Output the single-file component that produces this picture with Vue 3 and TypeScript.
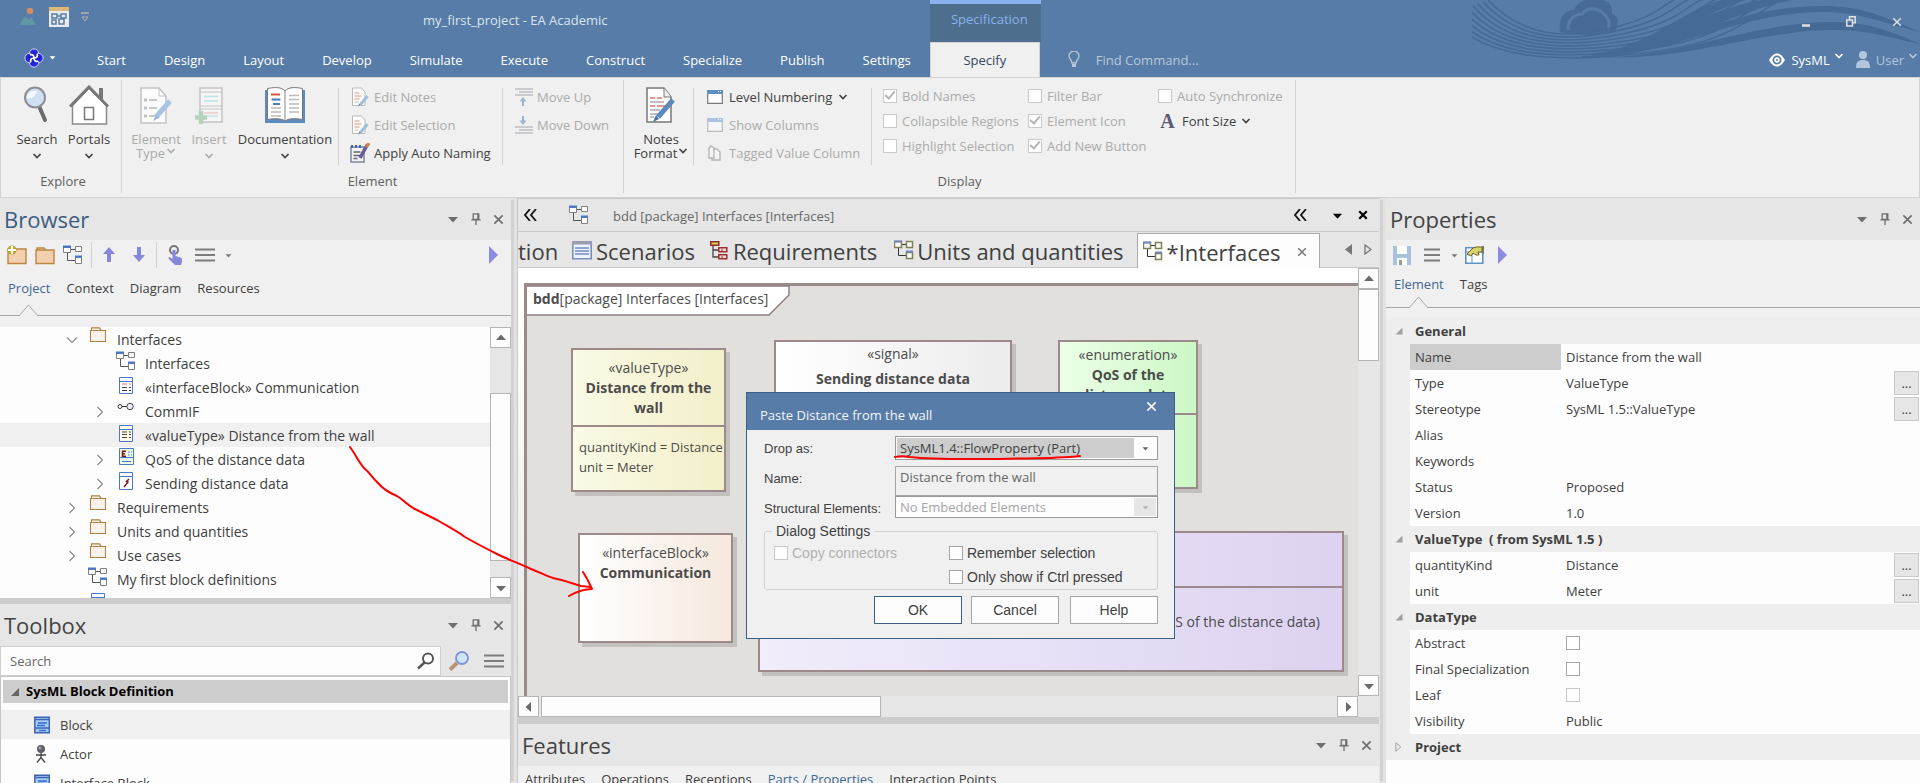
<script setup lang="ts">
import { ref } from 'vue'

const menuTabs: string[] = ['Start', 'Design', 'Layout', 'Develop', 'Simulate', 'Execute', 'Construct', 'Specialize', 'Publish', 'Settings']

interface Check { label: string; on: boolean }
const checkColumns = ref<Check[][]>([
  [{ label: 'Bold Names', on: true }, { label: 'Collapsible Regions', on: false }, { label: 'Highlight Selection', on: false }],
  [{ label: 'Filter Bar', on: false }, { label: 'Element Icon', on: true }, { label: 'Add New Button', on: true }],
])

interface Node { label: string; icon: string; level: 1 | 2; state: 'open' | 'closed' | 'leaf'; selected?: boolean }
const tree: Node[] = [
  { label: 'Interfaces', icon: 'pkg', level: 1, state: 'open' },
  { label: 'Interfaces', icon: 'diagram', level: 2, state: 'leaf' },
  { label: '«interfaceBlock» Communication', icon: 'iblock', level: 2, state: 'leaf' },
  { label: 'CommIF', icon: 'assoc', level: 2, state: 'closed' },
  { label: '«valueType» Distance from the wall', icon: 'vtype', level: 2, state: 'leaf', selected: true },
  { label: 'QoS of the distance data', icon: 'enum', level: 2, state: 'closed' },
  { label: 'Sending distance data', icon: 'signal', level: 2, state: 'closed' },
  { label: 'Requirements', icon: 'pkg', level: 1, state: 'closed' },
  { label: 'Units and quantities', icon: 'pkg', level: 1, state: 'closed' },
  { label: 'Use cases', icon: 'pkg', level: 1, state: 'closed' },
  { label: 'My first block definitions', icon: 'diagram', level: 1, state: 'leaf' },
  { label: '', icon: 'iblock', level: 1, state: 'leaf' },
]

const toolItems = [
  { label: 'Block', icon: 'block' },
  { label: 'Actor', icon: 'actor' },
  { label: 'Interface Block', icon: 'block' },
]

interface Prop { name: string; value?: string; check?: boolean; dim?: boolean; more?: boolean; selected?: boolean }
interface Section { title: string; open: boolean; rows: Prop[] }
const sections: Section[] = [
  {
    title: 'General', open: true, rows: [
      { name: 'Name', value: 'Distance from the wall', selected: true },
      { name: 'Type', value: 'ValueType', more: true },
      { name: 'Stereotype', value: 'SysML 1.5::ValueType', more: true },
      { name: 'Alias', value: '' },
      { name: 'Keywords', value: '' },
      { name: 'Status', value: 'Proposed' },
      { name: 'Version', value: '1.0' },
    ],
  },
  {
    title: 'ValueType  ( from SysML 1.5 )', open: true, rows: [
      { name: 'quantityKind', value: 'Distance', more: true },
      { name: 'unit', value: 'Meter', more: true },
    ],
  },
  {
    title: 'DataType', open: true, rows: [
      { name: 'Abstract', check: true },
      { name: 'Final Specialization', check: true },
      { name: 'Leaf', check: true, dim: true },
      { name: 'Visibility', value: 'Public' },
    ],
  },
  { title: 'Project', open: false, rows: [] },
]

const featureTabs = ['Attributes', 'Operations', 'Receptions', 'Parts / Properties', 'Interaction Points']
const waves = [0, 1, 2, 3, 4, 5, 6, 7, 8]
</script>

<template>
  <div class="app">
    <svg class="defs" aria-hidden="true">
      <symbol id="chev" viewBox="0 0 10 10"><path d="M1.5 3l3.5 3.5L8.500 3" fill="none" stroke="currentColor" stroke-width="1.600" /></symbol>
      <symbol id="caret" viewBox="0 0 12 12"><path d="M1 4h10L6 9.500z" fill="currentColor" /></symbol>
      <symbol id="pin" viewBox="0 0 12 14"><path d="M3 1h6v6H3zM1 7.500h10M6 8v5M8 1v6" fill="none" stroke="currentColor" stroke-width="1.400" /></symbol>
      <symbol id="cross" viewBox="0 0 12 12"><path d="M1.500 1.500l9 9M10.500 1.500l-9 9" fill="none" stroke="currentColor" stroke-width="1.800" /></symbol>
      <symbol id="play" viewBox="0 0 10 18"><path d="M0 0l9 9-9 9z" fill="#8c8cdf" /></symbol>
      <symbol id="lines" viewBox="0 0 20 14"><path d="M0 1.500h20M0 7h20M0 12.500h20" stroke="#7d7d7d" stroke-width="2.200" /></symbol>
      <symbol id="diagram" viewBox="0 0 20 20">
        <path d="M8 4.500h6M4.500 8v7.500H13" fill="none" stroke="#555" />
        <path d="M.5 1.500h7v6h-7zM12.500 1.500h6v5h-6zM12.500 12.500h6v6h-6z" fill="#fff" stroke="#808080" />
        <path d="M0 .5h8v2.500H0zM12 10.500h7V13h-7z" fill="#4f78c4" />
      </symbol>
      <symbol id="diagramTab" viewBox="0 0 20 20">
        <path d="M8 4.500h6M4.500 8v7.500H13" fill="none" stroke="#333" />
        <path d="M.5 1.500h7v6h-7zM12.500 1.500h6v6h-6zM12.500 12.500h6v6h-6z" fill="#fff" stroke="#7f7f55" stroke-width="1.500" />
        <path d="M0 .5h8v2H0zM12 10.500h7v2h-7z" fill="#6f86bb" />
      </symbol>
      <symbol id="pkg" viewBox="0 0 20 20"><path d="M2.500 3.500h15v11h-15zM3.500 3V.9h8l1.500 2.500" fill="#fdf1ec" stroke="#b0803f" stroke-width="1.100" /></symbol>
      <symbol id="iblock" viewBox="0 0 20 20">
        <path d="M3.500 2.500h13v16h-13z" fill="#fff" stroke="#4d78c8" /><path d="M3.500 6.500h13" stroke="#4d78c8" />
        <path d="M6 9h5M13 9h2" stroke="#e07060" /><path d="M6 12.500h5M13 12.500h2M6 15.500h5M13 15.500h2" stroke="#444" />
      </symbol>
      <symbol id="vtype" viewBox="0 0 20 20">
        <path d="M3.500 2.500h13v16h-13z" fill="#fffde8" stroke="#4d78c8" /><path d="M3.500 6.500h13" stroke="#4d78c8" />
        <path d="M6 9h5M13 9h2M6 11.500h5M13 11.500h2M6 14.500h5M13 14.500h2" stroke="#444" />
      </symbol>
      <symbol id="assoc" viewBox="0 0 20 20"><path d="M6 7.500h5" stroke="#333" /><circle cx="4" cy="7.500" r="2" fill="#fff" stroke="#333" /><circle cx="14" cy="7.500" r="3.200" fill="#eceafc" stroke="#444" /></symbol>
      <symbol id="enum" viewBox="0 0 20 20">
        <path d="M3.500 1.500h14v16h-14z" fill="#e9fbe4" stroke="#4d78c8" /><path d="M3.500 10.500h14M6 14.500h9M12 5h1.500M15 5h1M12 8h1.500M15 8h1" stroke="#4d78c8" />
        <path d="M10 4.300H6.500v5H10M6.500 6.800H9" fill="none" stroke="#7b1616" stroke-width="1.500" />
      </symbol>
      <symbol id="signal" viewBox="0 0 20 20">
        <path d="M3.500 1.500h13v17h-13z" fill="#fff" stroke="#4d78c8" /><path d="M3.500 5.500h13" stroke="#4d78c8" />
        <path d="M13 8l-2.500 2.500L12 11l-4 5" fill="none" stroke="#7b1616" stroke-width="1.400" />
      </symbol>
      <symbol id="block" viewBox="0 0 16 17"><path d="M.8.8h14.500v15.500H.8z" fill="#a9cdf6" stroke="#3f63b4" stroke-width="1.500" /><path d="M1 3h14M1 11.500h14" stroke="#3f63b4" stroke-width="1.300" /><path d="M4 6.500h9M3 9h8M5 14h7" stroke="#2f6fd0" stroke-width="1.400" /></symbol>
      <symbol id="actor" viewBox="0 0 16 18"><circle cx="7" cy="4" r="4" fill="#5e5e68" /><circle cx="6" cy="3" r="1.500" fill="#a5a5b0" /><path d="M7 8v5M2 10h10M7 12.500L3 17.500M7 12.500l4 5" stroke="#444" stroke-width="1.300" /></symbol>
      <symbol id="pageEdit" viewBox="0 0 18 20">
        <path d="M1.500 1h9l3.500 4v13.500H1.500z" fill="#fdfdfd" stroke="#b9b9b9" /><path d="M3.500 6h5M3.500 9h7M3.500 12h5" stroke="#eab7a4" stroke-width="1.300" /><path d="M3.500 15h4" stroke="#c4c4c4" />
        <path d="M16.500 9L9 18" stroke="#9cc0dc" stroke-width="3" /><path d="M9.500 17l-2 3 .5-3z" fill="#777" />
      </symbol>
      <symbol id="win" viewBox="0 0 16 14"><path d="M.7.7h14.600v12.600H.7z" fill="#fff" stroke="#7a7a7a" stroke-width="1.200" /><path d="M0 0h16v4H0z" fill="#5e8ec4" /><path d="M11 1.500h1M13 1.500h1" stroke="#fff" /></symbol>
      <symbol id="mag" viewBox="0 0 18 18"><circle cx="11" cy="6.500" r="5" fill="#fff" stroke="#555" stroke-width="2" /><path d="M7.500 10.500L1 16.500" stroke="#555" stroke-width="2.500" /></symbol>
    </svg>

    <header class="titlebar">
      <svg class="waves" viewBox="0 0 448 60" preserveAspectRatio="none" aria-hidden="true">
        <path d="M88 32C86 16 94 10 102 10 106 0 116-2 130 0c10 2 10 8 10 14 8 2 6 10 4 16C130 36 110 36 88 32z" fill="#476a96" />
        <path d="M96 30c0-10 6-16 14-16 6-8 16-6 22 0 6 6 6 10 4 16" fill="none" stroke="#567ca7" stroke-width="3" />
        <path v-for="i in waves" :key="i" :d="`M${16 - i * 5} ${i * 2}C${50 - i * 5} ${36 + i * 3} ${92 - i} ${40 + i * 3} ${140 + i * 5} ${28 + i * 3}S${190 + i * 12} 4 ${206 + i * 14} -2`" fill="none" stroke="#466a94" stroke-width="1.600" />
        <path d="M110 56C170 56 220 12 290 0h30C250 14 190 58 110 58zM120 54C180 46 210 10 250 0h24C230 12 190 50 120 56z" fill="#466a96" />
        <path d="M100 58C190 58 250 6 350 6c40 0 60 10 98 26-40-10-60-20-98-20C260 12 190 62 100 58z" fill="#466a96" />
        <path d="M130 57C210 57 280 22 360 22c40 0 64 12 88 22-30-6-50-14-88-14-70 0-150 32-230 27z" fill="#466a96" />
      </svg>
      <div class="titlerow">
        <div class="quick">
          <svg width="18" height="20" viewBox="0 0 18 20"><circle cx="11" cy="4" r="3.300" fill="#d18d66" /><path d="M0 18l6-9 4 4 2-3 5 8z" fill="#5f98a4" /></svg>
          <svg width="20" height="20" viewBox="0 0 20 20"><path d="M0 2h20v18H0z" fill="#e9ecef" /><path d="M0 0h20v4H0z" fill="#dcb878" /><path d="M3 7h5v4H3zM12 7h5v4h-5zM3 13h4v4H3zM10 12h5v5h-5zM8 9h4" fill="none" stroke="#5a7ba6" stroke-width="1.500" /></svg>
          <svg width="8" height="10" viewBox="0 0 8 10"><path d="M0 1h8" stroke="#b8b3ae" stroke-width="1.500" /><path d="M1 5h6L4 9z" fill="none" stroke="#b8b3ae" /></svg>
        </div>
        <h1 class="apptitle">my_first_project - EA Academic</h1>
        <div class="winbtns">
          <button aria-label="Minimize"><svg width="8" height="10" viewBox="0 0 8 10"><path d="M0 8.500h8" stroke="currentColor" stroke-width="2.500" /></svg></button>
          <button aria-label="Restore"><svg width="10" height="11" viewBox="0 0 10 11"><path d="M3.500 3.500V.8h5.700v6H6.500M.8 4h5.700v6H.8z" fill="none" stroke="currentColor" stroke-width="1.500" /></svg></button>
          <button aria-label="Close"><svg width="10" height="10"><use href="#cross" /></svg></button>
        </div>
      </div>
      <nav class="menurow">
        <button class="orb" aria-label="Application menu">
          <svg width="20" height="20" viewBox="0 0 20 20"><g fill="#2424d8" stroke="#d4d4ff" stroke-width="1"><circle cx="10" cy="5.500" r="4.600" /><circle cx="14.500" cy="10" r="4.600" /><circle cx="10" cy="14.500" r="4.600" /><circle cx="5.500" cy="10" r="4.600" /></g><circle cx="10" cy="10" r="5.500" fill="#2020c8" /><path d="M10 10c0-3-2-4-4-3M10 10c3 0 4-2 3-4M10 10c0 3 2 4 4 3M10 10c-3 0-4 2-3 4" fill="none" stroke="#fff" stroke-width="1.700" /></svg>
          <svg class="orbcaret" width="7" height="7"><use href="#caret" /></svg>
        </button>
        <button v-for="t in menuTabs" :key="t" class="menutab">{{ t }}</button>
        <div class="specwrap">
          <span class="speccap">Specification</span>
          <button class="spectab">Specify</button>
        </div>
        <label class="find">
          <svg width="12" height="17" viewBox="0 0 12 17"><path d="M4 12c0-3-3-4-3-7a5 5 0 0 1 10 0c0 3-3 4-3 7z" fill="none" stroke="currentColor" stroke-width="1.300" /><path d="M4 13h4v3H4z" fill="currentColor" /></svg>
          <input type="text" placeholder="Find Command..." aria-label="Find Command">
        </label>
        <div class="usr">
          <button class="persp"><svg width="16" height="14" viewBox="0 0 16 14"><path d="M0 7C3 2 5.500.5 8 .5S13 2 16 7c-3 5-5.500 6.500-8 6.500S3 12 0 7z" fill="#fff" /><circle cx="8" cy="7" r="3.600" fill="none" stroke="#567ca7" stroke-width="1.700" /><circle cx="8" cy="7" r="1" fill="#567ca7" /></svg>SysML<svg class="up" width="10" height="10"><use href="#chev" /></svg></button>
          <button class="user"><svg width="14" height="17" viewBox="0 0 14 17"><circle cx="7" cy="4" r="4" fill="#b4c6dc" /><path d="M0 17c0-6 2-8 7-8s7 2 7 8z" fill="#b4c6dc" /></svg>User<svg class="up" width="10" height="10"><use href="#chev" /></svg></button>
        </div>
      </nav>
    </header>

    <section class="ribbon">
      <div class="group explore">
        <div class="tools">
          <button class="big w50"><svg width="28" height="38" viewBox="0 0 28 38"><path d="M16 20l6 14" stroke="#6b6b6b" stroke-width="4" stroke-linecap="round" /><circle cx="12" cy="11.500" r="10" fill="#cfe0f2" stroke="#8d8d95" stroke-width="2" /><path d="M4 12c0-5 4-8 10-7-2 6-5 8-10 7z" fill="#f3f8fe" /></svg><span>Search</span><svg width="10" height="10"><use href="#chev" /></svg></button>
          <button class="big w54"><svg width="40" height="40" viewBox="0 0 40 40"><path d="M30 3h4v15h-4z" fill="#777" /><path d="M3.500 20.500V39h34V20.500L20 3z" fill="#fff" stroke="#8a8a8a" stroke-width="1.500" /><path d="M1 21.500L20 2l19 19.500" fill="none" stroke="#777" stroke-width="3" /><path d="M15.500 22.500h9v12h-9z" fill="#fff" stroke="#777" stroke-width="1.500" /></svg><span>Portals</span><svg width="10" height="10"><use href="#chev" /></svg></button>
        </div>
        <span class="caption">Explore</span>
      </div>
      <div class="group element">
        <div class="tools">
          <button class="big w54" disabled><svg width="32" height="38" viewBox="0 0 32 38"><path d="M1 2h18l7 8v27H1z" fill="#fbfbfb" stroke="#c4c4c4" stroke-width="1.500" /><path d="M19 2v8h7" fill="none" stroke="#c4c4c4" /><path d="M9 14h8M9 22h8M9 30h6" stroke="#c8c8c8" stroke-width="2" /><path d="M4 14h3M4 22h3M4 30h3" stroke="#c0c0c0" stroke-width="3" /><path d="M30 15L16 31" stroke="#a9c4e2" stroke-width="5" /><path d="M16 29l-3 6 6-3z" fill="#9db8d6" /></svg><span>Element</span><span class="inl">Type<svg width="10" height="10"><use href="#chev" /></svg></span></button>
          <button class="big w52" disabled><svg width="28" height="38" viewBox="0 0 28 38"><path d="M5 2h22v34H5z" fill="#f5f5f5" stroke="#c4c4c4" stroke-width="1.500" /><path d="M5 6h22M5 20h22M5 23h22" stroke="#c4c4c4" /><path d="M9 10.500h14M9 15h14M9 30h14" stroke="#bfe3e8" stroke-width="1.500" /><path d="M9 27h14" stroke="#ecc8c8" stroke-width="1.500" /><path d="M6 25v13M0 31.500h12" stroke="#b3d3bd" stroke-width="4.500" /></svg><span>Insert</span><svg width="10" height="10"><use href="#chev" /></svg></button>
          <button class="big w100"><svg width="40" height="36" viewBox="0 0 40 36"><path d="M0 3h40v33H0z" fill="#5d8bbf" /><path d="M2.500 1.500c8-1.500 14-1.500 17.500 2.500 3.500-4 9.500-4 17.500-2.500v31c-8-1.500-14-1-17.500 1.500-3.500-2.500-9.500-3-17.500-1.500z" fill="#fff" stroke="#777" /><path d="M20 4v30" stroke="#888" /><path d="M6 12.500h10M6 21h10M6 25h10M6 29h10M24 8.500h10M24 12.500h10M24 17h10M24 21h10M24 25h10" stroke="#b9b9b9" stroke-width="1.500" /><path d="M6 7.500h9" stroke="#d8573a" stroke-width="2" /><path d="M7 12.500h8M8 17h7" stroke="#4d7ec0" stroke-width="2" /></svg><span>Documentation</span><svg width="10" height="10"><use href="#chev" /></svg></button>
          <div class="stack first">
            <button disabled><svg width="20" height="20"><use href="#pageEdit" /></svg>Edit Notes</button>
            <button disabled><svg width="20" height="20"><use href="#pageEdit" /></svg>Edit Selection</button>
            <button><svg width="20" height="20" viewBox="0 0 20 20"><path d="M1 4h13v15H1z" fill="#f2f4f8" stroke="#7d879c" stroke-width="1.500" /><path d="M1 2h2v3H1zM5 2h2v3H5zM9 2h2v3H9z" fill="#3f65b8" /><path d="M3.500 9h7M3.500 12.500h7M3.500 15.500h4" stroke="#666" stroke-width="1.300" /><path d="M17.500 1.500L10 15" stroke="#6a5a96" stroke-width="3.500" /><path d="M19 0l-3 4" stroke="#c9824c" stroke-width="3" /></svg>Apply Auto Naming</button>
          </div>
          <div class="stack">
            <button disabled><svg width="18" height="18" viewBox="0 0 18 18"><path d="M0 1h18M4 4h14M0 7h18" stroke="#bdbdc4" stroke-width="1.700" /><path d="M8 18v-6" stroke="#9db4cc" stroke-width="2" /><path d="M4.500 13.500L8 9l3.500 4.500z" fill="#9db4cc" /></svg>Move Up</button>
            <button disabled><svg width="18" height="18" viewBox="0 0 18 18"><path d="M0 11h18M4 14h14M0 17h18" stroke="#bdbdc4" stroke-width="1.700" /><path d="M8 0v6" stroke="#9db4cc" stroke-width="2" /><path d="M4.500 4.500L8 9l3.500-4.500z" fill="#9db4cc" /></svg>Move Down</button>
          </div>
        </div>
        <span class="caption">Element</span>
      </div>
      <div class="group display">
        <div class="tools">
          <button class="big w60"><svg width="30" height="38" viewBox="0 0 30 38"><path d="M1 2h17l7 9v25H1z" fill="#fff" stroke="#777" stroke-width="1.500" /><path d="M18 2v9h7" fill="#eee" stroke="#777" /><path d="M4 12h5M11 12h5M4 20h5M11 20h8" stroke="#dc7a60" stroke-width="1.300" /><path d="M4 16h14M4 24h10M4 28h8M4 31h4" stroke="#aaa" stroke-width="1.300" /><path d="M27 14L12 31" stroke="#5b88bd" stroke-width="5" /><path d="M10 29l-3 7 6-3z" fill="#4b73a4" /></svg><span>Notes</span><span class="inl">Format<svg width="10" height="10"><use href="#chev" /></svg></span></button>
          <div class="stack lvl">
            <button><svg width="16" height="14"><use href="#win" /></svg>Level Numbering<svg width="10" height="10"><use href="#chev" /></svg></button>
            <button disabled><svg class="fade" width="16" height="14"><use href="#win" /></svg>Show Columns</button>
            <button disabled><svg width="16" height="16" viewBox="0 0 16 16"><path d="M2 3l2-2 3 2v10H2zM7 4h3l3 3v8H5v-2" fill="#f4f4f4" stroke="#b5b5b5" stroke-width="1.400" /></svg>Tagged Value Column</button>
          </div>
          <div class="checks">
            <div v-for="(col, c) in checkColumns" :key="c">
              <label v-for="k in col" :key="k.label"><input v-model="k.on" type="checkbox" disabled>{{ k.label }}</label>
            </div>
            <div>
              <label><input type="checkbox" disabled>Auto Synchronize</label>
              <button class="fontsize"><b>A</b>Font Size<svg width="10" height="10"><use href="#chev" /></svg></button>
            </div>
          </div>
        </div>
        <span class="caption">Display</span>
      </div>
    </section>

    <main class="work">
      <aside class="dock">
        <section class="browser">
          <div class="dockhead"><h2 class="active">Browser</h2><div class="hb"><button aria-label="Menu"><svg width="12" height="12"><use href="#caret" /></svg></button><button aria-label="Pin"><svg width="12" height="13"><use href="#pin" /></svg></button><button aria-label="Close"><svg width="11" height="11"><use href="#cross" /></svg></button></div></div>
          <div class="toolbar">
            <button aria-label="New package"><svg width="20" height="20" viewBox="0 0 20 20"><path d="M1 4h18v14.500H1z" fill="#f4cfae" stroke="#b98746" stroke-width="1.400" /><circle cx="5" cy="5" r="4.500" fill="#b8a320" /><path d="M5 1v8M1 5h8" stroke="#fff" stroke-width="2.200" /></svg></button>
            <button aria-label="Package"><svg width="20" height="20" viewBox="0 0 20 20"><path d="M2 5V3h7l2 2" fill="#f4cfae" stroke="#b98746" stroke-width="1.400" /><path d="M1 5h18v13.500H1z" fill="#f4cfae" stroke="#b98746" stroke-width="1.400" /></svg></button>
            <button aria-label="Diagram"><svg width="20" height="20"><use href="#diagram" /></svg></button>
            <i class="tsep"></i>
            <button aria-label="Move up"><svg width="14" height="16" viewBox="0 0 14 16"><path d="M7 15V5" stroke="#8686dc" stroke-width="4" /><path d="M1 7l6-7 6 7z" fill="#8686dc" /></svg></button>
            <button aria-label="Move down" class="dn"><svg width="14" height="16" viewBox="0 0 14 16"><path d="M7 0v10" stroke="#8686dc" stroke-width="4" /><path d="M1 8l6 7 6-7z" fill="#8686dc" /></svg></button>
            <i class="tsep"></i>
            <button aria-label="Select"><svg width="16" height="20" viewBox="0 0 16 20"><circle cx="7" cy="5" r="4" fill="none" stroke="#777" stroke-width="2" /><path d="M5.500 5h3v6l5 1.500c1.500.5 1.500 2 1.500 4l-1 3.500H8l-7-7 1.500-1 3 2z" fill="#8686dc" /></svg></button>
            <button aria-label="Options" class="opt"><svg width="20" height="14"><use href="#lines" /></svg></button>
            <svg class="gry" width="7" height="7"><use href="#caret" /></svg>
            <button class="end" aria-label="More"><svg width="10" height="18"><use href="#play" /></svg></button>
          </div>
          <div class="ptabs btabs"><button class="cur">Project</button><button>Context</button><button>Diagram</button><button>Resources</button></div>
          <div class="notch"><svg width="19" height="12" viewBox="0 0 19 12"><path d="M0 12L9.500 1 19 12" fill="#f0f0f0" stroke="#a8a8a8" /></svg></div>
          <div class="treewrap">
            <ul class="tree">
              <li v-for="(n, i) in tree" :key="i" :class="['lv' + n.level, { sel: n.selected }]">
                <span class="tw"><svg v-if="n.state !== 'leaf'" :class="{ shut: n.state === 'closed' }" width="12" height="12" viewBox="0 0 12 12"><path d="M1 3.500l5 5 5-5" fill="none" stroke="#8a8a8a" stroke-width="1.200" /></svg></span>
                <svg class="ti" width="20" height="20"><use :href="'#' + n.icon" /></svg>
                <span>{{ n.label }}</span>
              </li>
            </ul>
            <div class="vbar tv"><button aria-label="Scroll up"><svg class="flip" width="12" height="12"><use href="#caret" /></svg></button><i class="gap45"></i><i class="thumb"></i><i class="gap16"></i><button aria-label="Scroll down"><svg width="12" height="12"><use href="#caret" /></svg></button></div>
          </div>
        </section>
        <section class="toolbox">
          <div class="dockhead"><h2>Toolbox</h2><div class="hb"><button aria-label="Menu"><svg width="12" height="12"><use href="#caret" /></svg></button><button aria-label="Pin"><svg width="12" height="13"><use href="#pin" /></svg></button><button aria-label="Close"><svg width="11" height="11"><use href="#cross" /></svg></button></div></div>
          <div class="searchrow">
            <label class="sbox"><input type="text" placeholder="Search" aria-label="Search"><svg width="18" height="18"><use href="#mag" /></svg></label>
            <button aria-label="Find toolbox"><svg width="20" height="20" viewBox="0 0 20 20"><path d="M8 12l-7 6.500" stroke="#b99474" stroke-width="4" /><circle cx="13" cy="7" r="6" fill="#cfe6fa" stroke="#7f93d8" stroke-width="1.800" /></svg></button>
            <button aria-label="Toolbox menu"><svg width="20" height="14"><use href="#lines" /></svg></button>
          </div>
          <div class="tbody">
            <h3><svg width="8" height="8" viewBox="0 0 8 8"><path d="M8 0v8H0z" fill="#666" /></svg>SysML Block Definition</h3>
            <ul><li v-for="(t, i) in toolItems" :key="t.label" :class="{ hot: i === 0 }"><svg width="16" height="18"><use :href="'#' + t.icon" /></svg>{{ t.label }}</li></ul>
          </div>
        </section>
      </aside>

      <section class="centre">
        <div class="crumb">
          <button class="lft" aria-label="Collapse left"><svg width="13" height="12" viewBox="0 0 13 12"><path d="M6 0L1 6l5 6M12 0L7 6l5 6" fill="none" stroke="#111" stroke-width="1.800" /></svg></button>
          <svg class="cd" width="20" height="20"><use href="#diagram" /></svg>
          <span>bdd [package] Interfaces [Interfaces]</span>
          <div class="cr">
            <button aria-label="Collapse right"><svg width="13" height="12" viewBox="0 0 13 12"><path d="M6 0L1 6l5 6M12 0L7 6l5 6" fill="none" stroke="#111" stroke-width="1.800" /></svg></button>
            <button aria-label="Menu"><svg width="11" height="11"><use href="#caret" /></svg></button>
            <button aria-label="Close"><svg width="10" height="10" viewBox="0 0 12 12"><path d="M1.500 1.500l9 9M10.500 1.500l-9 9" stroke="#000" stroke-width="2.600" /></svg></button>
          </div>
        </div>
        <div class="dtabs">
          <button class="t0">tion</button>
          <button class="t1"><svg width="20" height="20" viewBox="0 0 20 20"><path d="M.8 1.800h18.400v17H.8z" fill="#eef2fa" stroke="#7a8fbe" stroke-width="1.600" /><path d="M0 1h20v3.500H0z" fill="#9a9cb4" /><path d="M3 8h14M3 11h14M3 14h14" stroke="#6d8ac8" stroke-width="1.500" /></svg>Scenarios</button>
          <button class="t2"><svg width="18" height="20" viewBox="0 0 18 20"><path d="M3 5v12h6M3 10h6" fill="none" stroke="#444" stroke-width="1.300" /><path d="M.8 1.800h8v3.500h-8z" fill="#e3cf4a" stroke="#8c2c2c" stroke-width="1.500" /><path d="M8.800 7.800h8v4h-8zM8.800 14.800h8v4h-8z" fill="#f3dcdc" stroke="#9c3030" stroke-width="1.500" /><path d="M12 9v2M12 16v2" stroke="#9c3030" /></svg>Requirements</button>
          <button class="t3"><svg width="20" height="20"><use href="#diagramTab" /></svg>Units and quantities</button>
          <button class="on"><svg width="20" height="20"><use href="#diagramTab" /></svg>*Interfaces<svg class="tx" width="10" height="10"><use href="#cross" /></svg></button>
          <div class="nav"><svg width="8" height="11" viewBox="0 0 8 11"><path d="M8 0v11L1 5.500z" fill="#777" /></svg><svg width="8" height="11" viewBox="0 0 8 11"><path d="M1 1v9l6-4.500z" fill="none" stroke="#777" stroke-width="1.300" /></svg></div>
        </div>
        <div class="view">
          <div class="canvas">
            <div class="frame">
              <div class="ftag"><svg width="264" height="32" viewBox="0 0 264 32" aria-hidden="true"><path d="M0 1h262v9l-20 20H0" fill="#fff" stroke="#8f7f7f" stroke-width="1.500" /></svg><span><b>bdd</b>[package] Interfaces [Interfaces]</span></div>
            </div>
            <article class="node vt"><div class="nh">«valueType»<b>Distance from the wall</b></div><div class="nb"><p>quantityKind = Distance</p><p>unit = Meter</p></div></article>
            <article class="node sg"><div class="nh">«signal»<b>Sending distance data</b></div></article>
            <article class="node en"><div class="nh">«enumeration»<b>QoS of the distance data</b></div><div class="nb"></div></article>
            <article class="node ib"><div class="nh">«interfaceBlock»<b>Communication</b></div></article>
            <article class="node pu"><div class="nh"></div><div class="nb"><p>(QoS of the distance data)</p></div></article>
          </div>
          <div class="vbar cv"><button aria-label="Scroll up"><svg class="flip" width="12" height="12"><use href="#caret" /></svg></button><i class="thumb"></i><i class="gap"></i><button aria-label="Scroll down"><svg width="12" height="12"><use href="#caret" /></svg></button></div>
        </div>
        <div class="hbar"><button aria-label="Scroll left"><svg class="rl" width="12" height="12"><use href="#caret" /></svg></button><i class="thumb"></i><i class="gap"></i><button aria-label="Scroll right"><svg class="rr" width="12" height="12"><use href="#caret" /></svg></button><i class="corner"></i></div>
        <section class="features">
          <div class="dockhead"><h2>Features</h2><div class="hb"><button aria-label="Menu"><svg width="12" height="12"><use href="#caret" /></svg></button><button aria-label="Pin"><svg width="12" height="13"><use href="#pin" /></svg></button><button aria-label="Close"><svg width="11" height="11"><use href="#cross" /></svg></button></div></div>
          <div class="ptabs ftabs"><button v-for="f in featureTabs" :key="f" :class="{ cur: f.startsWith('Parts') }">{{ f }}</button></div>
        </section>
      </section>

      <aside class="props">
        <div class="dockhead"><h2>Properties</h2><div class="hb"><button aria-label="Menu"><svg width="12" height="12"><use href="#caret" /></svg></button><button aria-label="Pin"><svg width="12" height="13"><use href="#pin" /></svg></button><button aria-label="Close"><svg width="11" height="11"><use href="#cross" /></svg></button></div></div>
        <div class="toolbar pt">
          <button aria-label="Save"><svg width="18" height="19" viewBox="0 0 18 19"><path d="M0 0h18v19H0z" fill="#a9c1dd" /><path d="M4 0h10v8H4zM4 12h10v7H4z" fill="#fff" /><path d="M6 14h3v5H6z" fill="#9a9a9a" /></svg></button>
          <button aria-label="Options" class="m"><svg width="16" height="14" viewBox="0 0 16 14"><path d="M0 1.500h16M0 7h16M0 12.500h16" stroke="#7d7d7d" stroke-width="2.200" /></svg></button>
          <svg class="gry" width="7" height="7"><use href="#caret" /></svg>
          <button aria-label="Property window" class="w"><svg width="19" height="18" viewBox="0 0 19 18"><path d="M.8 1.800h17v15.500H.8z" fill="#fff" stroke="#5e93c8" stroke-width="1.600" /><path d="M1 6h17M7 6v11" stroke="#5e93c8" /><path d="M17 0h2v8h-2z" fill="#777" /><path d="M2 8l6-6 3-1h6v5h-4l1 3-3 0-3-2-2 3z" fill="#d9d468" stroke="#6a6422" /></svg></button>
          <button aria-label="More" class="p"><svg width="10" height="18"><use href="#play" /></svg></button>
        </div>
        <div class="ptabs etabs"><button class="cur">Element</button><button>Tags</button></div>
        <div class="notch pn"><svg width="19" height="12" viewBox="0 0 19 12"><path d="M0 12L9.500 1 19 12" fill="#f0f0f0" stroke="#a8a8a8" /></svg></div>
        <div class="gridwrap">
          <table class="grid">
            <colgroup><col class="c-gut"><col class="c-key"><col></colgroup>
            <tbody v-for="s in sections" :key="s.title">
              <tr class="sec"><td class="gut"><svg width="8" height="10" viewBox="0 0 8 10"><path v-if="s.open" d="M7.500 1.500v7h-7z" fill="#a0a0a0" /><path v-else d="M.8.8v8.400l5-4.200z" fill="none" stroke="#a0a0a0" /></svg></td><th colspan="2">{{ s.title }}</th></tr>
              <tr v-for="p in s.rows" :key="p.name"><td class="gut"></td><td :class="['k', { sel: p.selected }]">{{ p.name }}</td><td class="v"><div><input v-if="p.check" type="checkbox" :aria-label="p.name" :disabled="p.dim"><span v-else>{{ p.value }}</span><button v-if="p.more" class="more" :aria-label="'Edit ' + p.name">...</button></div></td></tr>
            </tbody>
          </table>
        </div>
      </aside>

      <div class="dialog" role="dialog" aria-labelledby="dlgtitle">
        <div class="dt"><span id="dlgtitle">Paste Distance from the wall</span><button aria-label="Close dialog"><svg width="11" height="11"><use href="#cross" /></svg></button></div>
        <div class="form">
          <label for="dropas">Drop as:</label>
          <div class="cmb"><select id="dropas"><option>SysML1.4::FlowProperty (Part)</option></select><span><svg width="7" height="7"><use href="#caret" /></svg></span></div>
          <label for="nm">Name:</label>
          <input id="nm" type="text" value="Distance from the wall" readonly>
          <label for="se">Structural Elements:</label>
          <div class="cmb off"><select id="se" disabled><option>No Embedded Elements</option></select><span><svg width="7" height="7"><use href="#caret" /></svg></span></div>
        </div>
        <fieldset><legend>Dialog Settings</legend>
          <label class="dim"><input type="checkbox" disabled>Copy connectors</label>
          <label><input type="checkbox">Remember selection</label>
          <label class="c2"><input type="checkbox">Only show if Ctrl pressed</label>
        </fieldset>
        <div class="btns"><button class="ok">OK</button><button>Cancel</button><button class="help">Help</button></div>
      </div>

      <svg class="ink" viewBox="0 0 1100 420" aria-hidden="true">
        <path d="M350 249c6 8 8 14 14 21 6 5 8 9 13 14 6 7 12 11 20 14 8 5 8 7 16 12l24 12c10 6 18 10 28 17 12 7 22 12 34 18 10 5 20 8 32 14 10 4 18 8 22 9 10 2 18 5 28 8l10 1" />
        <path d="M583 374c4 6 6 10 9 17-8 0-16 3-23 7" />
        <path d="M895 259c5-1 9-1 14 0 30 3 60 2 90 2 28-1 54 0 81-3" />
      </svg>
    </main>
  </div>
</template>

<style>
html, body { margin: 0; }
</style>

<style scoped>
.app { height: 100vh; display: flex; flex-direction: column; overflow: hidden; background: #eee; color: #404040; font: 13px/18px "Open Sans", "Noto Sans", sans-serif; }
.app * { box-sizing: border-box; }
.defs { display: none; }
button { font: inherit; color: inherit; background: none; border: 0; padding: 0; margin: 0; white-space: nowrap; }
input, select { font: inherit; color: inherit; margin: 0; border-radius: 0; }
svg { display: block; flex: none; }
ul { list-style: none; margin: 0; padding: 0; }
h1, h2, h3, p { margin: 0; font-weight: 400; }

input[type="checkbox"] { appearance: none; width: 14px; height: 14px; border: 1px solid #a5a5a5; background: #fff; flex: none; display: grid; place-items: center; }
input[type="checkbox"]:disabled { border-color: #c9c9c9; }
input[type="checkbox"]:checked::before { content: ""; width: 8px; height: 4px; border: solid #b5b5b5; border-width: 0 0 2px 2px; transform: rotate(-50deg); margin-bottom: 3px; }

.titlebar { position: relative; flex: none; height: 77px; background: #567ca7; color: #fff; display: flex; flex-direction: column; }
.waves { position: absolute; right: 0; top: 0; width: 448px; height: 60px; }
.titlerow { height: 42px; display: flex; align-items: flex-start; position: relative; }
.quick { display: flex; gap: 12px; padding: 7px 0 0 19px; width: 423px; align-items: center; }
.apptitle { font-size: 13px; line-height: 18px; color: #dbe4ee; padding-top: 11px; flex: 1; }
.winbtns { display: flex; gap: 36px; padding: 16px 18px 0 0; color: #e0e0e0; align-items: center; }
.menurow { display: flex; height: 35px; position: relative; align-items: stretch; }
.orb { display: flex; align-items: center; gap: 5px; width: 78px; padding: 0 0 4px 24px; }
.menutab { padding: 0 19px; }
.specwrap { position: relative; width: 110px; display: flex; }
.speccap { position: absolute; left: 0; bottom: 35px; width: 111px; height: 43px; border-top: 5px solid #8ab2ec; background: #4e6e8e; color: #8ab2ec; text-align: center; line-height: 31px; padding-left: 8px; }
.spectab { flex: 1; background: #f0f0f0; color: #33475f; border: 1px solid #d4d4d4; border-bottom: 0; }
.find { display: flex; align-items: center; gap: 16px; margin-left: 28px; color: #b9c8d8; }
.find input { background: none; border: 0; outline: 0; padding: 0; width: 160px; }
.find input::placeholder { color: #b9c8d8; opacity: 1; }
.usr { margin-left: auto; display: flex; align-items: center; gap: 12px; padding-right: 2px; }
.persp, .user { display: flex; align-items: center; gap: 6px; }
.user { color: #b4c6dc; }
.up { margin-bottom: 8px; }
.usr .up { margin-left: -2px; }

.ribbon { flex: none; height: 121px; display: flex; background: #f0f0f0; border: 1px solid #d2d2d2; }
.group { border-right: 1px solid #d2d2d2; margin: 2px 0 4px; display: flex; flex-direction: column; justify-content: space-between; }
.tools { display: flex; }
.caption { text-align: center; color: #5e5e5e; padding-bottom: 3px; }
.explore { width: 121px; }
.explore .tools { padding-left: 11px; }
.explore .caption { padding-left: 4px; }
.big { display: flex; flex-direction: column; align-items: center; line-height: 14px; padding-top: 5px; height: 92px; }
.big > svg:first-child { height: 40px; margin-bottom: 7px; }
.big > span + svg { margin-top: 5px; }
.inl { display: flex; gap: 1px; }
.w50 { width: 50px; }
.w52 { width: 52px; }
.w54 { width: 54px; }
.w60 { width: 58px; }
.w100 { width: 100px; }
button:disabled { color: #ababab; }
.element { width: 502px; }
.element .tools { padding-left: 7px; }
.stack { border-left: 1px solid #d2d2d2; padding-left: 12px; margin-top: 8px; height: 77px; }
.stack.first { margin-left: 3px; width: 164px; padding-left: 11px; }
.stack button { display: flex; align-items: center; gap: 4px; height: 28px; margin-top: -5px; margin-bottom: 5px; }
.display { width: 672px; }
.display .tools { padding-left: 8px; }
.lvl { margin-left: 3px; width: 178px; padding-left: 13px; }
.stack.lvl button { gap: 6px; }
.fade { opacity: .45; }
.checks { border-left: 1px solid #d2d2d2; margin-top: 8px; height: 77px; padding-left: 11px; display: grid; grid-template-columns: 145px 130px auto; color: #ababab; }
.checks > div { margin-top: -5px; }
.checks label, .fontsize { display: flex; align-items: center; gap: 5px; height: 25px; white-space: nowrap; }
.fontsize { color: #404040; }
.fontsize b { font: 700 20px/20px "Liberation Serif", serif; color: #5b5775; width: 19px; }

.work { position: relative; flex: 1; min-height: 0; display: grid; grid-template-columns: 511px minmax(0, 1fr) 534px; column-gap: 6px; background: #e2e2e2; overflow: hidden; }
.work > * { min-height: 0; }
.dock { display: flex; flex-direction: column; box-shadow: 5px 0 0 -2px #d2d2d2; }
.dockhead { height: 42px; background: #e6e6e6; display: flex; align-items: center; justify-content: space-between; flex: none; padding: 0 7px 0 4px; }
.dockhead h2 { font-size: 22px; line-height: 32px; color: #434343; }
.dockhead h2.active { color: #3d5c82; }
.hb { display: flex; gap: 11px; align-items: center; color: #6e6e6e; }
.browser { flex: 1; min-height: 0; display: flex; flex-direction: column; background: #f0f0f0; border-bottom: 6px solid #ccc; }
.toolbar { display: flex; align-items: center; height: 30px; padding-left: 7px; gap: 8px; flex: none; }
.tsep { width: 1px; height: 26px; background: #cfcfcf; }
.tsep + button { margin-left: 2px; }
.dn { margin: 0 2px 0 8px; }
.opt { margin-left: 4px; }
.toolbar .gry { color: #777; margin-left: 2px; }
.toolbar .end { margin-left: auto; margin-right: 12px; }
.ptabs { display: flex; gap: 16px; flex: none; align-items: flex-start; }
.ptabs .cur { color: #3f6894; }
.btabs { padding: 9px 8px 0; height: 34px; }
.notch { border-bottom: 1px solid #a8a8a8; height: 12px; padding-left: 19px; flex: none; }
.notch svg { height: 12px; }
.treewrap { flex: 1; min-height: 0; margin-top: 11px; display: flex; background: #fdfdfd; overflow: hidden; }
.tree { flex: 1; overflow: hidden; font-size: 14px; }
.tree li { height: 24px; display: flex; align-items: center; white-space: nowrap; }
.lv1 { padding-left: 66px; }
.lv2 { padding-left: 94px; }
.tree li.sel { background: #f0f0f0; }
.tw { width: 22px; display: flex; padding-top: 2px; }
.shut { transform: rotate(-90deg); }
.ti { margin-right: 9px; align-self: flex-start; }
.tree li > span:last-child { padding-top: 1px; }
.vbar { width: 21px; background: #e6e6e6; display: flex; flex-direction: column; flex: none; color: #6a6a6a; }
.vbar button, .hbar button { width: 21px; height: 21px; border: 1px solid #b5b5b5; background: #fdfdfd; display: grid; place-items: center; flex: none; }
.thumb { background: #fdfdfd; border: 1px solid #b5b5b5; display: block; }
.tv .thumb { flex: 1; }
.gap45 { height: 45px; }
.gap16 { height: 16px; }
.flip { transform: rotate(180deg); }
.rl { transform: rotate(90deg); }
.rr { transform: rotate(-90deg); }

.toolbox { flex: 0 0 179px; display: flex; flex-direction: column; overflow: hidden; background: #e6e6e6; }
.searchrow { display: flex; height: 30px; align-items: center; flex: none; }
.searchrow button { margin-left: 8px; }
.searchrow button + button { margin-left: 15px; }
.sbox { width: 441px; height: 30px; border: 1px solid #cfcfcf; background: #fdfdfd; display: flex; align-items: center; padding: 0 5px 0 9px; }
.sbox input { border: 0; background: none; flex: 1; outline: 0; padding: 0; }
.sbox input::placeholder { color: #666; opacity: 1; }
.tbody { flex: 1; border: 1px solid #c4c4c4; background: #fdfdfd; padding-top: 3px; }
.tbody h3 { background: #cdcdcd; color: #000; font-weight: 700; font-size: 13px; line-height: 23px; margin: 0 2px 7px; padding-left: 8px; display: flex; align-items: center; gap: 7px; }
.tbody li { height: 29px; display: flex; align-items: center; gap: 10px; padding-left: 33px; }
.tbody .hot { background: #f0f0f0; }

.centre { display: flex; flex-direction: column; border-left: 1px solid #c9c9c9; border-top: 1px solid #c9c9c9; min-width: 0; padding-right: 1px; background: #e6e6e6; box-shadow: 5px 0 0 -2px #d2d2d2; }
.crumb { height: 33px; border-bottom: 1px solid #c9c9c9; display: flex; align-items: center; flex: none; padding: 0 11px 0 6px; color: #666; }
.crumb .lft { margin-right: 32px; }
.crumb .cd { margin-right: 24px; }
.crumb > span { padding-top: 2px; }
.cr { margin-left: auto; display: flex; align-items: center; gap: 15px; color: #000; }
.cr button:first-child { margin-right: 10px; }
.dtabs { height: 36px; display: flex; font-size: 22px; line-height: 30px; border-bottom: 1px solid #c9c9c9; flex: none; }
.dtabs button { display: flex; align-items: center; gap: 4px; padding-top: 2px; }
.dtabs button svg { margin-bottom: 2px; }
.dtabs .t0 { width: 40px; margin-right: 14px; }
.dtabs .t1 { margin-right: 15px; }
.dtabs .t2 { margin-right: 17px; gap: 5px; }
.dtabs .t3 { margin-right: 13px; gap: 3px; }
.dtabs .on { background: #fdfdfd; border: 1px solid #aaa; border-bottom: 0; margin: 1px 0 -1px; padding: 2px 12px 0 5px; }
.dtabs .tx { color: #777; margin: 0 0 0 12px; }
.nav { margin-left: auto; display: flex; gap: 12px; align-items: center; padding-right: 7px; }
.view { flex: 1; min-height: 0; display: flex; }
.canvas { position: relative; flex: 1; overflow: hidden; background: linear-gradient(#fff 0, #fff 30px, #e8e8e8 100%); font-size: 14px; line-height: 20px; color: #4c4c4c; }
.frame { position: absolute; inset: 15px 0 0 6px; background: #e1e0dc; border-top: 3px solid #9a8b8b; border-left: 3px solid #9a8b8b; }
.ftag { position: absolute; left: 0; top: -1px; }
.ftag span { position: absolute; left: 6px; top: 4px; white-space: nowrap; }
.node { position: absolute; border: 2px solid #9c8a8a; box-shadow: 4px 4px 0 #c3c1be; text-align: center; }
.node b { display: block; }
.nb { border-top: 2px solid #9c8a8a; text-align: left; white-space: nowrap; }
.vt { left: 53px; top: 80px; width: 155px; height: 144px; background: linear-gradient(90deg, #fafae6, #f2efc9); }
.vt .nh { height: 75px; padding: 8px 12px 0; }
.vt .nb { padding: 10px 0 0 6px; font-size: 13px; }
.sg { left: 256px; top: 72px; width: 238px; height: 110px; background: linear-gradient(90deg, #fff, #ececec); }
.sg .nh { padding-top: 2px; }
.sg b { padding-top: 5px; }
.en { left: 540px; top: 72px; width: 140px; height: 149px; background: linear-gradient(90deg, #ebffe7, #cdf7c6); }
.en .nh { height: 71px; padding: 3px 16px 0; }
.ib { left: 60px; top: 265px; width: 155px; height: 110px; background: linear-gradient(90deg, #fff, #f5e8dc); }
.ib .nh { padding-top: 8px; }
.pu { left: 240px; top: 263px; width: 586px; height: 141px; background: linear-gradient(90deg, #f1edfb, #ddd2f1); }
.pu .nh { height: 53px; }
.pu .nb { padding: 24px 22px 0 0; text-align: right; }
.cv .thumb { height: 72px; }
.gap { flex: 1; }
.hbar { display: flex; height: 21px; flex: none; color: #6a6a6a; }
.hbar .thumb { width: 340px; margin-left: 2px; }
.corner { width: 21px; }
.features { flex: 0 0 66px; border-top: 7px solid #ccc; background: #f0f0f0; overflow: hidden; }
.ftabs { padding: 4px 7px 0; }

.props { display: flex; flex-direction: column; background: #fdfdfd; overflow: hidden; }
.pt, .etabs, .pn { background: #f0f0f0; }
.pt { height: 30px; gap: 0; }
.pt .m { margin: 0 9px 0 13px; }
.pt .w { margin: 0 14px 0 7px; }
.etabs { padding: 5px 8px 0; height: 26px; }
.pn { padding-left: 23px; }
.gridwrap { flex: 1; border-top: 10px solid #f0f0f0; }
.grid { width: 100%; border-collapse: collapse; table-layout: fixed; }
.c-gut { width: 24px; }
.c-key { width: 151px; }
.grid td, .grid th { padding: 0; text-align: left; height: 26px; }
.grid th { font-weight: 700; padding-left: 5px; white-space: pre; }
.sec { background: #eee; }
.grid .gut { background: #eee; }
.gut svg { margin-left: 9px; }
.grid .k { padding-left: 5px; }
.k.sel { background: #cdcdcd; }
.v div { display: flex; align-items: center; height: 26px; padding-left: 5px; }
.more { width: 25px; height: 24px; margin: 0 1px 0 auto; background: #e6e6e6; border: 1px solid #c9c9c9; }

.dialog { position: absolute; left: 50%; top: 194px; width: 429px; margin-left: -214px; border: 1px solid #3d5f87; background: #f0f0f0; font: 14px/18px "Liberation Sans", Arial, sans-serif; padding-bottom: 14px; }
.dt { background: #567ca7; color: #f3f6f9; height: 37px; display: flex; justify-content: space-between; padding: 8px 17px 0 13px; font: 13px/18px "Open Sans", sans-serif; }
.dt span { padding-top: 5px; }
.dt button { height: 11px; }
.form { display: grid; grid-template-columns: 131px 1fr; padding: 6px 16px 0 17px; grid-template-rows: 24px 36px 22px; font-size: 13px; }
.form label { padding-top: 4px; white-space: nowrap; }
.form label[for="nm"] { padding-top: 10px; }
.cmb { border: 1px solid #9a9a9a; background: #fdfdfd; padding: 1px; display: flex; min-width: 0; }
.cmb select { appearance: none; border: 0; background: #cdcdcd; flex: 1; padding: 0 3px; font: 13px/18px "Open Sans", sans-serif; }
.cmb span { width: 22px; display: grid; place-items: center; color: #666; }
.cmb.off select { background: none; color: #a5a5a5; opacity: 1; }
.cmb.off span { background: #e6e6e6; color: #b5b5b5; }
#nm { border: 1px solid #a5a5a5; background: #f0f0f0; color: #666; margin-top: 6px; padding: 0 4px 9px; font: 13px/18px "Open Sans", sans-serif; }
fieldset { margin: 4px 16px 0 17px; padding: 4px 8px 7px 9px; border: 1px solid #d2d2d2; border-radius: 3px; display: grid; grid-template-columns: 175px 1fr; grid-auto-rows: 18px; row-gap: 6px; height: 68px; }
legend { padding: 0 4px; margin-left: -2px; }
fieldset label { display: flex; align-items: center; gap: 4px; height: 18px; white-space: nowrap; }
.dim { color: #b0b0b0; }
.c2 { grid-column: 2; }
.btns { display: flex; justify-content: flex-end; padding: 6px 16px 0; gap: 9px; }
.btns button { width: 88px; height: 28px; border: 1px solid #a5a5a5; background: #fdfdfd; }
.btns .ok { border-color: #3d5f87; }
.btns .help { margin-left: 2px; }

.ink { position: absolute; left: 0; top: 0; width: 1100px; height: 420px; fill: none; stroke: #f00; stroke-width: 2; stroke-linecap: round; stroke-linejoin: round; pointer-events: none; }
</style>
